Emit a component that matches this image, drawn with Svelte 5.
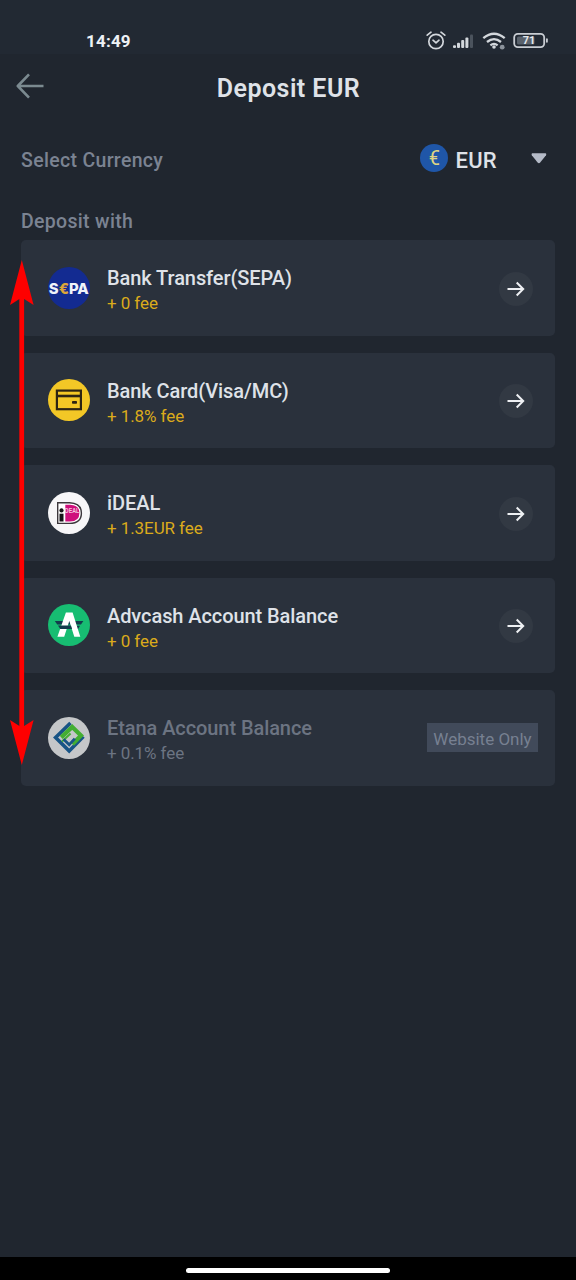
<!-- Deposit screen -->

<script lang="ts">
  type Method = { id: string; name: string; fee: string; disabled?: boolean };

  const methods: Method[] = [
    { id: 'sepa', name: 'Bank Transfer(SEPA)', fee: '+ 0 fee' },
    { id: 'card', name: 'Bank Card(Visa/MC)', fee: '+ 1.8% fee' },
    { id: 'ideal', name: 'iDEAL', fee: '+ 1.3EUR fee' },
    { id: 'advcash', name: 'Advcash Account Balance', fee: '+ 0 fee' },
    { id: 'etana', name: 'Etana Account Balance', fee: '+ 0.1% fee', disabled: true }
  ];
</script>

<svelte:head>
  <title>Deposit EUR</title>
</svelte:head>

<div class="screen">
  <div class="status">
    <span class="time">14:49</span>
    <svg class="indicators" width="124" height="22" viewBox="0 0 124 22">
      <!-- alarm -->
      <g fill="none" stroke="#d3d7dc" stroke-width="1.7" stroke-linecap="round" stroke-linejoin="round">
        <circle cx="10" cy="11.5" r="7.2" />
        <path d="M7 10.2 L10 12.8 L13 10.2" />
        <path d="M1.2 5.2 L5 2.2 M15 2.2 L18.8 5.2" />
      </g>
      <!-- signal -->
      <g fill="#d3d7dc">
        <rect x="27" y="15.2" width="3" height="2.8" rx="1" />
        <rect x="31" y="12.8" width="3" height="5.2" rx="1" />
        <rect x="35.2" y="10" width="3" height="8" rx="1" />
        <rect x="39.4" y="7.4" width="3" height="10.6" rx="1" />
        <rect x="44" y="4.4" width="3" height="13.6" rx="1" fill="#4b535d" />
      </g>
      <!-- wifi -->
      <g fill="none" stroke="#d3d7dc" stroke-width="2.3">
        <path d="M57.3 8.2 Q68 -0.8 78.7 8.2" />
        <path d="M61 12 Q68 6.2 75 12" />
        <path d="M64.4 15.3 Q68 12.4 71.6 15.3" />
      </g>
      <circle cx="68" cy="17" r="1.8" fill="#d3d7dc" />
      <circle cx="76.2" cy="17.2" r="2.4" fill="#8b929b" />
      <!-- battery -->
      <rect x="88.2" y="3.9" width="30" height="13.2" rx="3.6" fill="none" stroke="#c9cdd3" stroke-width="1.8" />
      <rect x="91" y="6.4" width="17.5" height="8.2" rx="1.5" fill="#59616b" />
      <rect x="120" y="8.3" width="1.8" height="4.4" rx="0.9" fill="#c9cdd3" />
      <text x="103" y="14.4" text-anchor="middle" class="level">71</text>
    </svg>
  </div>

  <header>
    <svg class="back" width="28" height="28" viewBox="0 0 28 28" fill="none" stroke="#7b8a90" stroke-width="2.6" stroke-linejoin="round">
      <path d="M27.5 14 H2 M13 2.3 L1.8 14 L13 25.6" />
    </svg>
    <h1>Deposit EUR</h1>
  </header>

  <div class="currency">
    <span class="label">Select Currency</span>
    <div class="picker">
      <span class="coin">€</span>
      <span class="code">EUR</span>
      <svg width="16" height="11" viewBox="0 0 16 11">
        <path d="M1.2 .3 H14.6 Q15.8 .8 15 2.2 L9.2 9.6 Q7.9 11 6.6 9.6 L.8 2.2 Q0 .8 1.2 .3Z" fill="#b4bac7" />
      </svg>
    </div>
  </div>

  <div class="label section">Deposit with</div>

  <main>
    {#each methods as m (m.id)}
      <div class="card" class:disabled={m.disabled}>
        <svg class="logo" width="42" height="42" viewBox="0 0 42 42">
          {#if m.id === 'sepa'}
            <circle cx="21" cy="21" r="21" fill="#132b91" />
            <text x="0.8" y="26.6" class="sepa" textLength="40" lengthAdjust="spacingAndGlyphs">S<tspan fill="#dda638">€</tspan>PA</text>
          {:else if m.id === 'card'}
            <circle cx="21" cy="21" r="21" fill="#f3c726" />
            <rect x="8.9" y="11.6" width="24" height="18.6" fill="none" stroke="#2d2413" stroke-width="2.2" />
            <path d="M9 17 H33" stroke="#2d2413" stroke-width="2.6" />
            <rect x="24" y="22" width="5" height="2.8" rx="0.8" fill="#2d2413" />
          {:else if m.id === 'ideal'}
            <circle cx="21" cy="21" r="21" fill="#f7f6f8" />
            <path d="M9.7 10.7 H21.5 Q33.4 11.2 33.4 21 Q33.4 31.4 21.5 31.4 H9.7 Z" fill="#fff" stroke="#3c373c" stroke-width="1.4" />
            <path d="M17.3 12.7 H22 Q31.4 13 31.4 21 Q31.4 29.5 22 29.5 H17.3 Z" fill="#cf0f7c" />
            <circle cx="13.5" cy="18.4" r="2.1" fill="#161316" />
            <rect x="11.5" y="21.7" width="4" height="7.8" fill="#161316" />
            <text x="16.8" y="21" class="ideal" textLength="14.5" lengthAdjust="spacingAndGlyphs">DEAL</text>
          {:else if m.id === 'advcash'}
            <circle cx="21" cy="21" r="21" fill="#17bd72" />
            <path d="M6.8 17 H35.4 L33 20.4 H9.2 Z" fill="#143c4d" />
            <path d="M27 21.8 H32 L30 25 H27 Z" fill="#143c4d" />
            <path d="M17.9 8.6 H24.6 L32.3 32.8 H26.3 L21.3 17 L16.2 32.8 H9.4 Z" fill="#fff" />
            <path d="M10 21.6 H23 L24.1 25 H12.2 Z" fill="#143c4d" />
          {:else}
            <circle cx="21" cy="21" r="21" fill="#c5c7c9" />
            <g fill="none">
              <path d="M22.5 6 L7.6 20.4 L21.2 34 L35.4 19.6" stroke="#175486" stroke-width="3.6" />
              <path d="M13.2 20.4 L24.2 10 L33 18.6 L24.4 27.2" stroke="#43ae32" stroke-width="4.2" />
              <path d="M14 24.4 L22.6 16.4" stroke="#43ae32" stroke-width="2" />
              <path d="M17.2 21.6 L22.8 27.2 L28.4 21" stroke="#175486" stroke-width="2.8" transform="translate(-1.6 .6)" />
            </g>
          {/if}
        </svg>

        <div class="info">
          <div class="name">{m.name}</div>
          <div class="fee">{m.fee}</div>
        </div>

        {#if m.disabled}
          <span class="tag">Website Only</span>
        {:else}
          <span class="go">
            <svg width="18" height="16" viewBox="0 0 18 16" fill="none" stroke="#eef0f3" stroke-width="2">
              <path d="M.5 8 H16 M9.7 1.5 L16.2 8 L9.7 14.5" />
            </svg>
          </span>
        {/if}
      </div>
    {/each}

    <!-- red double arrow laid over the edge of the list -->
    <svg class="marker" width="24" height="505" viewBox="0 0 24 505" fill="#fe0000">
      <rect x="9.3" y="36" width="4.8" height="433" />
      <path d="M11.8 0 L23.6 45 L11.8 37.5 L0 45 Z" />
      <path d="M11.8 505 L0 460 L11.8 467.5 L23.6 460 Z" />
    </svg>
  </main>

  <div class="nav"><div class="pill"></div></div>
</div>

<style>
  :global(body) {
    margin: 0;
    background: #20262f;
  }

  .screen {
    display: flex;
    flex-direction: column;
    width: 576px;
    height: 1280px;
    background: #20262f;
    color: #dfe2e8;
    font-family: Roboto, "Liberation Sans", sans-serif;
    overflow: hidden;
  }

  .status {
    display: flex;
    justify-content: space-between;
    align-items: center;
    box-sizing: border-box;
    height: 54px;
    padding: 28px 26px 0 86px;
    background: #222933;
  }

  .time {
    font-size: 17px;
    font-weight: 700;
    letter-spacing: 0.2px;
    color: #eef1f5;
  }

  .level {
    font: 700 11px Roboto, sans-serif;
    fill: #e4e7eb;
  }

  header {
    display: grid;
    grid-template-columns: 28px 1fr 28px;
    align-items: center;
    height: 66px;
    padding: 0 15px 0 16px;
  }

  .back {
    margin-top: -2px;
  }

  h1 {
    margin: 3px 0 0;
    text-align: center;
    font-size: 25px;
    line-height: 32px;
    font-weight: 600;
    letter-spacing: 0.45px;
  }

  .currency {
    display: flex;
    justify-content: space-between;
    align-items: center;
    height: 80px;
    padding: 0 29px 0 21px;
  }

  .label {
    font-size: 19.5px;
    font-weight: 500;
    letter-spacing: 0.32px;
    color: #7b8392;
  }

  .picker {
    display: flex;
    align-items: center;
  }

  .picker svg {
    margin: -4px 0 0 34px;
  }

  .coin {
    width: 28px;
    height: 28px;
    margin: -4px 7px 0 0;
    border-radius: 50%;
    background: #1f56a8;
    color: #dfd584;
    font-size: 20px;
    line-height: 28px;
    text-align: center;
  }

  .code {
    font-size: 22px;
    font-weight: 500;
    letter-spacing: 0.3px;
  }

  .section {
    height: 40px;
    padding-left: 21px;
    line-height: 44px;
  }

  main {
    position: relative;
    display: flex;
    flex: 1;
    flex-direction: column;
    gap: 17px;
    padding: 0 21px;
  }

  .card {
    display: flex;
    align-items: center;
    box-sizing: border-box;
    height: 95.5px;
    padding: 0 22px 0 27px;
    border-radius: 5px;
    background: #2a313c;
  }

  .info {
    flex: 1;
    margin-left: 17px;
    padding-top: 5px;
  }

  .name {
    font-size: 20px;
    line-height: 26px;
    font-weight: 500;
    letter-spacing: -0.08px;
  }

  .fee {
    font-size: 17px;
    line-height: 24px;
    letter-spacing: -0.08px;
    color: #dbab1b;
  }

  .go {
    display: flex;
    align-items: center;
    justify-content: center;
    width: 34px;
    height: 34px;
    margin-top: 2px;
    border-radius: 50%;
    background: #323943;
  }

  .disabled {
    padding-right: 17px;
  }

  .disabled .name,
  .disabled .fee {
    color: #6c7482;
  }

  .tag {
    width: 111px;
    height: 29px;
    background: #414a5a;
    color: #778091;
    font-size: 17px;
    line-height: 33px;
    text-align: center;
  }

  .sepa {
    font: 800 15px Inter, sans-serif;
    fill: #f1f3fa;
  }

  .ideal {
    font: 700 6.5px "Liberation Sans", sans-serif;
    fill: #f3c5de;
  }

  .marker {
    position: absolute;
    left: 10px;
    top: 20px;
  }

  .nav {
    display: flex;
    align-items: center;
    justify-content: center;
    height: 23px;
    background: #000;
  }

  .pill {
    width: 204px;
    height: 5px;
    margin-top: 4px;
    border-radius: 3px;
    background: #fff;
  }
</style>
